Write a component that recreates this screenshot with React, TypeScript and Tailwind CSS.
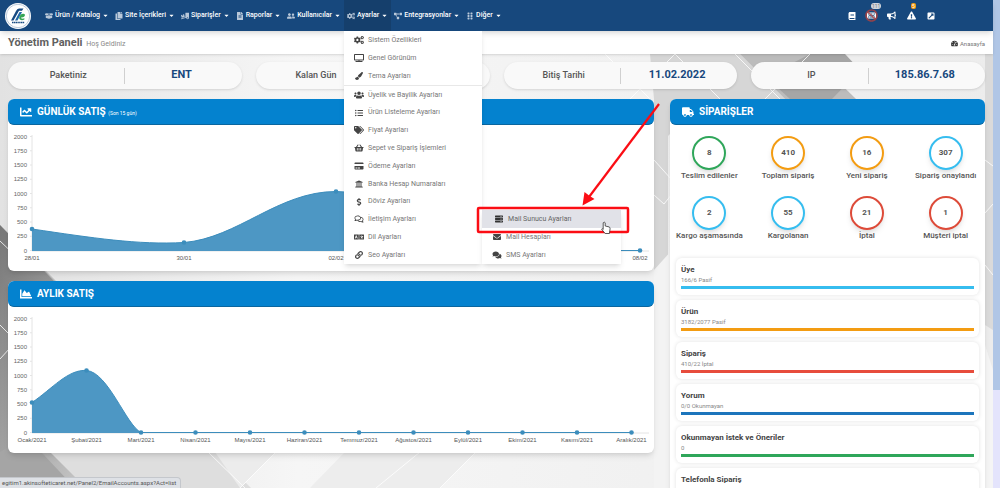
import type { ReactNode } from "react"
import type { IconType } from "react-icons"
import {
    FaBoxOpen, FaCopy, FaTruckLoading, FaFileAlt, FaUserFriends, FaCogs, FaProjectDiagram, FaGripVertical,
    FaTv, FaPaintBrush, FaUsers, FaListUl, FaTags, FaShoppingBasket, FaCreditCard, FaUniversity,
    FaDollarSign, FaRegComments, FaLanguage, FaLink, FaServer, FaEnvelope, FaComments, FaChartLine,
    FaChartArea, FaTruck, FaBook, FaBullhorn, FaExclamationTriangle, FaExternalLinkSquareAlt,
    FaTachometerAlt, FaCaretDown, FaKeyboard, FaBan,
} from "react-icons/fa"

interface MenuEntry {
    label: string
    icon: IconType
}

const navBefore: MenuEntry[] = [
    { label: "Ürün / Katalog", icon: FaBoxOpen },
    { label: "Site İçerikleri", icon: FaCopy },
    { label: "Siparişler", icon: FaTruckLoading },
    { label: "Raporlar", icon: FaFileAlt },
    { label: "Kullanıcılar", icon: FaUserFriends },
]

const navAfter: MenuEntry[] = [
    { label: "Entegrasyonlar", icon: FaProjectDiagram },
    { label: "Diğer", icon: FaGripVertical },
]

const generalMenu: MenuEntry[] = [
    { label: "Sistem Özellikleri", icon: FaCogs },
    { label: "Genel Görünüm", icon: FaTv },
    { label: "Tema Ayarları", icon: FaPaintBrush },
]

const shopMenu: MenuEntry[] = [
    { label: "Üyelik ve Bayilik Ayarları", icon: FaUsers },
    { label: "Ürün Listeleme Ayarları", icon: FaListUl },
    { label: "Fiyat Ayarları", icon: FaTags },
    { label: "Sepet ve Sipariş İşlemleri", icon: FaShoppingBasket },
    { label: "Ödeme Ayarları", icon: FaCreditCard },
    { label: "Banka Hesap Numaraları", icon: FaUniversity },
    { label: "Döviz Ayarları", icon: FaDollarSign },
    { label: "İletişim Ayarları", icon: FaRegComments },
    { label: "Dil Ayarları", icon: FaLanguage },
    { label: "Seo Ayarları", icon: FaLink },
]

const summary = [
    { label: "Paketiniz", value: "ENT" },
    { label: "Kalan Gün", value: "" },
    { label: "Bitiş Tarihi", value: "11.02.2022" },
    { label: "IP", value: "185.86.7.68" },
]

const orders = [
    { label: "Teslim edilenler", value: 8, ring: "border-[#2fa65a]" },
    { label: "Toplam sipariş", value: 410, ring: "border-[#f39c12]" },
    { label: "Yeni sipariş", value: 16, ring: "border-[#f39c12]" },
    { label: "Sipariş onaylandı", value: 307, ring: "border-[#36bdef]" },
    { label: "Kargo aşamasında", value: 2, ring: "border-[#36bdef]" },
    { label: "Kargolanan", value: 55, ring: "border-[#36bdef]" },
    { label: "İptal", value: 21, ring: "border-[#dd4b39]" },
    { label: "Müşteri iptal", value: 1, ring: "border-[#dd4b39]" },
]

const stats = [
    { title: "Üye", detail: "166/6 Pasif", bar: "bg-[#36bdef]" },
    { title: "Ürün", detail: "3182/2077 Pasif", bar: "bg-[#f39c12]" },
    { title: "Sipariş", detail: "410/22 İptal", bar: "bg-[#e74c3c]" },
    { title: "Yorum", detail: "0/0 Okunmayan", bar: "bg-[#1c75bc]" },
    { title: "Okunmayan İstek ve Öneriler", detail: "0", bar: "bg-[#2fa65a]" },
    { title: "Telefonla Sipariş", detail: "17", bar: "bg-[#36bdef]" },
]

const NavButton = ({ label, icon: Icon, active }: MenuEntry & { active?: boolean }) => (
    <button className={`flex h-full items-center gap-[2px] px-[3px] text-[7px] font-medium text-white ${active ? "bg-[#153f6c]" : ""}`}>
        <Icon className="size-2 text-[#b9c8d9]" />
        <span className="whitespace-nowrap">{label}</span>
        <FaCaretDown className="size-[7px]" />
    </button>
)

const MenuLink = ({ label, icon: Icon }: MenuEntry) => (
    <li className="flex">
        <a href="#" className="flex flex-1 items-center gap-1 pl-[10px] text-[7px] text-[#777]">
            <Icon className="w-[10px] h-2 text-[#444]" />
            {label}
        </a>
    </li>
)

const SettingsMenu = () => (
    <div className="absolute left-0 top-full z-20 w-[138px] bg-white shadow-md">
        <ul className="grid h-[54px] auto-rows-fr">
            {generalMenu.map((item) => <MenuLink key={item.label} {...item} />)}
        </ul>
        <ul className="grid h-[179px] auto-rows-fr border-t border-[#e8e8e8]">
            {shopMenu.map((item) => <MenuLink key={item.label} {...item} />)}
        </ul>
        <ul className="absolute bottom-0 left-full grid h-[54px] w-[139px] auto-rows-fr bg-white shadow-md">
            <li className="flex">
                <a href="#" className="flex flex-1 items-center gap-1 bg-[#e1e2e8] pl-3 text-[7px] text-[#666]">
                    <FaServer className="w-[10px] h-2 text-[#333]" />
                    Mail Sunucu Ayarları
                </a>
            </li>
            <MenuLink label="Mail Hesapları" icon={FaEnvelope} />
            <MenuLink label="SMS Ayarları" icon={FaComments} />
        </ul>
    </div>
)

const Header = () => (
    <header className="relative z-10 flex h-[31px] items-center bg-[#17487d] shadow-md">
        <a href="#" aria-label="Akınsoft" className="ml-[5px] mr-[11px]">
            <svg viewBox="0 0 26 26" className="size-[26px]">
                <circle cx="13" cy="13" r="13" fill="#fff" />
                <circle cx="13" cy="13" r="11.7" fill="none" stroke="#8aa3c0" strokeWidth=".6" />
                <path d="M6 17.500 11 8Q12 5.500 14 5.500h4.500l-1.500 2.300h-3L8.500 17.500z" fill="#174a82" />
                <path d="M10 17.500 14.500 9h2.500L12.500 17.500z" fill="#2269a8" />
                <path d="M19.400 16.600c-2.400 1.400-5.200.6-5.200-1.500 0-2.300 1.900-4.300 4-4.300 2 0 2.300 1.700 1.100 2.700-.8.700-2 1-3.300 1 0 1.300 1.700 1.500 3.400.8z" fill="#35a554" />
                <path d="M7 19.500h12.500" stroke="#174a82" strokeWidth="1.3" strokeDasharray="1.400 .4" />
            </svg>
        </a>
        <nav className="flex h-full flex-1">
            {navBefore.map((item) => <NavButton key={item.label} {...item} />)}
            <div className="relative h-full">
                <NavButton label="Ayarlar" icon={FaCogs} active />
                <SettingsMenu />
            </div>
            {navAfter.map((item) => <NavButton key={item.label} {...item} />)}
        </nav>
        <div className="mr-[58px] flex items-center gap-[11px] text-white">
            <button aria-label="Yardım"><FaBook className="size-2" /></button>
            <button aria-label="Klavye" className="relative">
                <FaKeyboard className="size-[9px]" />
                <FaBan className="absolute -inset-[2px] size-[13px] text-[#b0413e]/80" />
                <span className="absolute -top-2 left-1 rounded-sm bg-[#d2d6de] px-px text-[5px] leading-[6px] text-[#777]">111</span>
            </button>
            <button aria-label="Duyurular"><FaBullhorn className="size-[9px]" /></button>
            <button aria-label="Uyarılar" className="relative">
                <FaExclamationTriangle className="size-[9px]" />
                <span className="absolute -top-2 left-1 rounded-xs bg-[#f39c12] px-px text-[5px] leading-[6px]">5</span>
            </button>
            <button aria-label="Siteyi aç"><FaExternalLinkSquareAlt className="size-2" /></button>
        </div>
    </header>
)

interface PanelProps {
    icon: IconType
    title: string
    note?: string
    children: ReactNode
}

const Panel = ({ icon: Icon, title, note, children }: PanelProps) => (
    <section className="rounded-md bg-white shadow-md">
        <h2 className="flex h-[26px] items-center gap-[5px] rounded-md border-b border-[#0a669f] bg-[#0482cf] px-3 text-[10px] font-bold text-white">
            <Icon className="size-3" />
            <span>{title} {note && <small className="text-[5px] font-normal">{note}</small>}</span>
        </h2>
        {children}
    </section>
)

interface ChartProps {
    title: string
    labels: { x: number; text: string }[]
    points: [number, number][]
    line: string
}

const ticks = [2000, 1750, 1500, 1250, 1000, 750, 500, 250, 0]

const AreaChart = ({ title, labels, points, line }: ChartProps) => (
    <svg viewBox="0 0 646 146" role="img" aria-label={title} className="w-full font-['Liberation_Sans',sans-serif] text-[6px]">
        <path d="M24 10V126H641" fill="none" stroke="#e4e4e4" />
        {ticks.map((tick, i) => (
            <g key={tick}>
                <path d={`M22 ${11.5 + i * 14.25}h2`} stroke="#e4e4e4" />
                <text x="19" y={13.5 + i * 14.25} textAnchor="end" fill="#666">{tick}</text>
            </g>
        ))}
        <path d={`${line}V126H24Z`} fill="#4d97c4" />
        <path d={line} fill="none" stroke="#3c8dbc" />
        {points.map(([x, y]) => <circle key={x} cx={x} cy={y} r="2.3" fill="#3c8dbc" />)}
        {labels.map(({ x, text }) => (
            <text key={text} x={x} y="135" textAnchor="middle" fill="#555">{text}</text>
        ))}
    </svg>
)

const dailyPoints: [number, number][] = [[24, 104], [176, 117.5], [328, 66.5], [480, 125.5], [632, 125.5]]
const dailyLabels = ["28/01", "30/01", "02/02", "05/02", "08/02"].map((text, i) => ({ text, x: 24 + i * 152 }))

const months = ["Ocak", "Şubat", "Mart", "Nisan", "Mayıs", "Haziran", "Temmuz", "Ağustos", "Eylül", "Ekim", "Kasım", "Aralık"]
const monthlyLabels = months.map((month, i) => ({ text: `${month}/2021`, x: 24 + i * 54.5 }))
const monthlyPoints = months.map((_, i): [number, number] => [24 + i * 54.5, [95.5, 63.5][i] ?? 125.5])

const Backdrop = () => (
    <svg viewBox="0 0 993 488" preserveAspectRatio="none" aria-hidden="true" className="absolute inset-0 -z-10 size-full">
        <defs>
            <linearGradient id="base" x1="0" y1="0" x2="1" y2="0">
                <stop offset="0" stopColor="#e2e2e2" />
                <stop offset=".3" stopColor="#f6f6f6" />
                <stop offset="1" stopColor="#ececec" />
            </linearGradient>
            <linearGradient id="dark" x1="0" y1="0" x2="1" y2="1">
                <stop offset="0" stopColor="#777" />
                <stop offset="1" stopColor="#d8d8d8" />
            </linearGradient>
        </defs>
        <path d="M0 0H993V488H0z" fill="url(#base)" />
        <path d="M0 100V225L60 285 8 300 0 305z" fill="#bdbdbd" />
        <path d="M0 225 130 360V488H0z" fill="url(#dark)" />
        <path d="M0 452 26 436 75 488H0z" fill="#a5a5a5" />
        <path d="M50 452H215L251 488H86z" fill="#dedede" />
        <path d="M215 452H276L240 488z" fill="#ececec" />
        <path d="M345 452H476L440 488H310z" fill="#ededed" />
        <path d="M650 54H740L785 99H705L668 136V488H654V99z" fill="#d6d6d6" />
        <path d="M740 54H810L856 99H785z" fill="#bcbcbc" />
        <path d="M810 54H845L860 70 832 99H790L766 77z" fill="#a6a6a6" />
        <path d="M654 270 672 250V488H654z" fill="#f3f3f3" />
        <path d="M985 54H993V330L985 325z" fill="#dadada" />
        <path d="M985 345 993 370V488H985z" fill="#f5f5f5" />
        <path d="M0 241 20 260M0 325 15 340M0 359 10 348M208 452 245 488M276 452 240 488M420 452 376 488M476 452 440 488M605 54 650 99M630 99 675 54 720 99M735 54 780 99M765 99 810 54M654 195 664 204 672 194M654 160 672 180M985 160 993 166M985 213 993 204M985 265 993 275" fill="none" stroke="#fff" strokeWidth="1" strokeOpacity=".8" />
    </svg>
)

// Red frame, arrow and hand pointer over the open submenu
const Callout = () => (
    <svg viewBox="0 0 190 140" aria-hidden="true" className="pointer-events-none absolute left-[474px] top-[100px] z-30 h-[140px] w-[190px]">
        <rect x="4" y="108" width="150" height="24" rx="1" fill="none" stroke="#fb0d14" strokeWidth="2.500" />
        <path d="M185 4 115 97" stroke="#fb0d14" strokeWidth="2.200" />
        <path d="M108.500 105.500 110.500 92 115 95.500 120.500 99z" fill="#fb0d14" />
        <path d="M129.200 129.500v-6.700q1-1.400 2 0v3.200l3.800.9q1.200.4 1.100 1.800l-.7 4.800h-4.200l-3.600-4.200q.2-1.600 1.600.2" fill="#fff" stroke="#333" strokeWidth=".8" />
    </svg>
)

const App = () => {
    return (
        <div className="relative flex h-screen overflow-hidden font-[Roboto,sans-serif] text-[#555]">
            <div className="relative isolate min-w-0 flex-1">
                <Backdrop />
                <Header />
                <div className="flex h-[23px] items-center justify-between bg-white px-2 pt-[2px] shadow-sm">
                    <h1 className="text-[11px] font-bold text-[#606060]">
                        Yönetim Paneli <small className="ml-px text-[7px] font-normal text-[#888]">Hoş Geldiniz</small>
                    </h1>
                    <a href="#" className="flex items-center gap-[2px] text-[6px] text-[#777]">
                        <FaTachometerAlt className="size-[7px] text-[#333]" />
                        Anasayfa
                    </a>
                </div>
                <main className="px-2 pt-2">
                    <div className="grid grid-cols-4 gap-[14px]">
                        {summary.map(({ label, value }) => (
                            <div key={label} className="flex h-[27px] items-center rounded-full bg-[#f9f9f9] text-center shadow">
                                <span className="flex-1 pl-1 text-[9px] font-medium">{label}</span>
                                <span className="h-4 w-px bg-[#d0d0d0]" />
                                <span className="flex-1 pr-1 text-[11px] font-bold text-[#17487d]">{value}</span>
                            </div>
                        ))}
                    </div>
                    <div className="mt-[10px] flex items-start gap-4">
                        <div className="flex min-w-0 flex-[646] flex-col gap-[10px]">
                            <Panel icon={FaChartLine} title="GÜNLÜK SATIŞ" note="(Son 15 gün)">
                                <AreaChart
                                    title="Günlük satış"
                                    labels={dailyLabels}
                                    points={dailyPoints}
                                    line="M24 104C85 113 130 120 176 117.500C230 113 270 66.500 328 66.500C390 66.500 430 125.500 480 125.500H632"
                                />
                            </Panel>
                            <Panel icon={FaChartArea} title="AYLIK SATIŞ">
                                <AreaChart
                                    title="Aylık satış"
                                    labels={monthlyLabels}
                                    points={monthlyPoints}
                                    line="M24 95.500C44 82 60 62 78.500 63.500C100 65 118 118 133 125.500H623.500"
                                />
                            </Panel>
                        </div>
                        <div className="min-w-0 flex-[315]">
                            <Panel icon={FaTruck} title="SİPARİŞLER">
                                <div className="grid grid-cols-4 gap-y-[14px] pt-[11px] text-center">
                                    {orders.map(({ label, value, ring }) => (
                                        <div key={label} className="flex flex-col items-center">
                                            <span className={`flex size-[34px] items-center justify-center rounded-full border-2 text-[8px] font-bold shadow-md ${ring}`}>
                                                {value}
                                            </span>
                                            <span className="whitespace-nowrap text-[8px] font-medium leading-[12px]">{label}</span>
                                        </div>
                                    ))}
                                </div>
                                <ul className="mt-4 flex flex-col gap-[5px] px-[6px]">
                                    {stats.map(({ title, detail, bar }) => (
                                        <li key={title} className="h-[37px] rounded-md px-[5px] pt-[7px] shadow-[0_0_4px_#0000001f]">
                                            <h3 className="text-[8px] font-bold leading-[10px] text-[#444]">{title}</h3>
                                            <p className="text-[6px] leading-[10px] text-[#888]">{detail}</p>
                                            <div className={`mt-px h-[3px] ${bar}`} />
                                        </li>
                                    ))}
                                </ul>
                            </Panel>
                        </div>
                    </div>
                </main>
            </div>
            <div className="w-[7px] bg-[#e4e4fc]">
                <div className="h-4/5 bg-[#b0c6e6]" />
            </div>
            <Callout />
            <div className="absolute bottom-0 left-0 rounded-tr-sm border-r border-t border-[#c4c7cc] bg-[#dee1e6] pl-[2px] pr-1 text-[6px] leading-[10px] text-[#555]">
                egitim1.akinsofteticaret.net/Panel2/EmailAccounts.aspx?Act=list
            </div>
        </div>
    )
}

export default App
